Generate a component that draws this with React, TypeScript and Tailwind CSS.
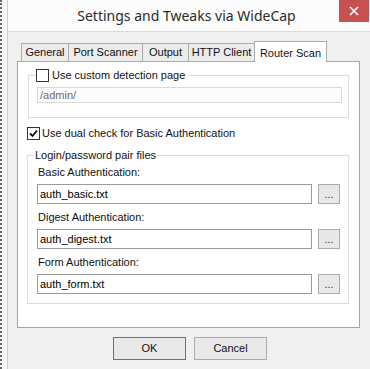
const ui = { fontFamily: '"Liberation Sans", Arial, sans-serif' };

const tabs = [
  { label: "General", w: "w-[47px]" },
  { label: "Port Scanner", w: "w-[74px]" },
  { label: "Output", w: "w-[46px]" },
  { label: "HTTP Client", w: "w-[66px]" },
];

const Check = ({ checked }: { checked?: boolean }) => (
  <span className="w-[13px] h-[13px] border border-[#333] bg-white flex items-center justify-center shrink-0">
    {checked && (
      <svg width="9" height="9" viewBox="0 0 9 9">
        <path d="M1 4.5 L3.5 7 L8 1.5" stroke="#111" strokeWidth="1.8" fill="none" />
      </svg>
    )}
  </span>
);

const FileRow = ({ label, value }: { label: string; value: string }) => (
  <>
    <div className="ml-[10px] h-[14px] leading-[14px] text-[11px] text-[#111]">{label}</div>
    <div className="flex items-center mt-[5px] ml-[9px] mr-[8px] gap-[6px]">
      <div className="flex-1 h-[20px] border border-[#9a9a9a] bg-white px-[2px] leading-[18px] text-[11px] text-black">
        {value}
      </div>
      <button className="w-[22px] h-[20px] border border-[#acacac] bg-[#e8e8e8] text-[11px] leading-[14px] text-[#333] flex items-end justify-center pb-[2px]">
        ...
      </button>
    </div>
  </>
);

export default function App() {
  return (
    <div className="w-[370px] h-[369px] overflow-hidden flex bg-[#f0f0f0]" style={ui}>
      <div className="w-[7px] h-full bg-[#f5f5f5] border-l-2 border-dotted border-[#666]" />
      <div className="flex-1 flex flex-col border-l border-[#cfcfcf]">
        <div className="h-[31px] bg-[#fcfcfc] flex items-start">
          <div
            className="flex-1 h-[31px] flex items-center justify-center pl-[26px] text-[14px] text-[#2b2b2b]"
            style={{ fontFamily: '"Noto Sans", "Open Sans", sans-serif' }}
          >
            Settings and Tweaks via WideCap
          </div>
          <div className="w-[30px] h-[22px] bg-[#c75050] flex items-center justify-center mr-[1px]">
            <svg width="10" height="10" viewBox="0 0 10 10">
              <path d="M1 1 L9 9 M9 1 L1 9" stroke="#fff" strokeWidth="1.6" />
            </svg>
          </div>
        </div>
        <div className="flex-1 border-t border-[#dadada] pt-[9px] pl-[9px] pr-[10px]">
          <div className="flex items-end pl-[4px] h-[21px] -mb-px relative z-10">
            {tabs.map((t) => (
              <div
                key={t.label}
                className={`${t.w} h-[19px] border border-[#acacac] border-r-0 bg-[#ececec] text-[11px] text-[#111] whitespace-nowrap flex items-center justify-center`}
              >
                {t.label}
              </div>
            ))}
            <div className="w-[73px] h-[21px] border border-[#acacac] border-b-0 bg-white text-[11px] text-[#111] whitespace-nowrap flex items-start pt-[3px] justify-center">
              Router Scan
            </div>
          </div>
          <div className="h-[267px] border border-[#a5a5a5] bg-white flex flex-col">
            <fieldset className="mt-[6px] ml-[10px] mr-[10px] border border-[#dcdcdc]">
              <legend className="ml-[7px] pr-[3px] flex items-center gap-[3px] h-[14px] text-[11px] text-[#111]">
                <Check />
                Use custom detection page
              </legend>
              <div className="mt-[5px] mb-[14px] ml-[8px] mr-[6px] h-[16px] border border-[#d9d9d9] bg-[#fbfbfb] px-[2px] leading-[14px] text-[11px] text-[#6d6d6d]">
                /admin/
              </div>
            </fieldset>
            <div className="mt-[8px] ml-[9px] flex items-center gap-[2px] h-[14px] text-[11px] text-[#111]">
              <Check checked />
              Use dual check for Basic Authentication
            </div>
            <fieldset className="mt-[8px] ml-[9px] mr-[10px] border border-[#dcdcdc] pb-[9px]">
              <legend className="ml-[6px] px-[1px] h-[14px] leading-[14px] text-[11px] text-[#111]">
                Login/password pair files
              </legend>
              <div className="mt-[3px]" />
              <FileRow label="Basic Authentication:" value="auth_basic.txt" />
              <div className="mt-[6px]" />
              <FileRow label="Digest Authentication:" value="auth_digest.txt" />
              <div className="mt-[6px]" />
              <FileRow label="Form Authentication:" value="auth_form.txt" />
            </fieldset>
          </div>
          <div className="flex gap-[8px] pl-[96px] mt-[9px]">
            <button className="w-[73px] h-[23px] border border-[#3c7fb1] bg-[#e9e9e9] text-[11px] text-[#111]">
              OK
            </button>
            <button className="w-[73px] h-[23px] border border-[#acacac] bg-[#e9e9e9] text-[11px] text-[#111]">
              Cancel
            </button>
          </div>
        </div>
      </div>
    </div>
  );
}
